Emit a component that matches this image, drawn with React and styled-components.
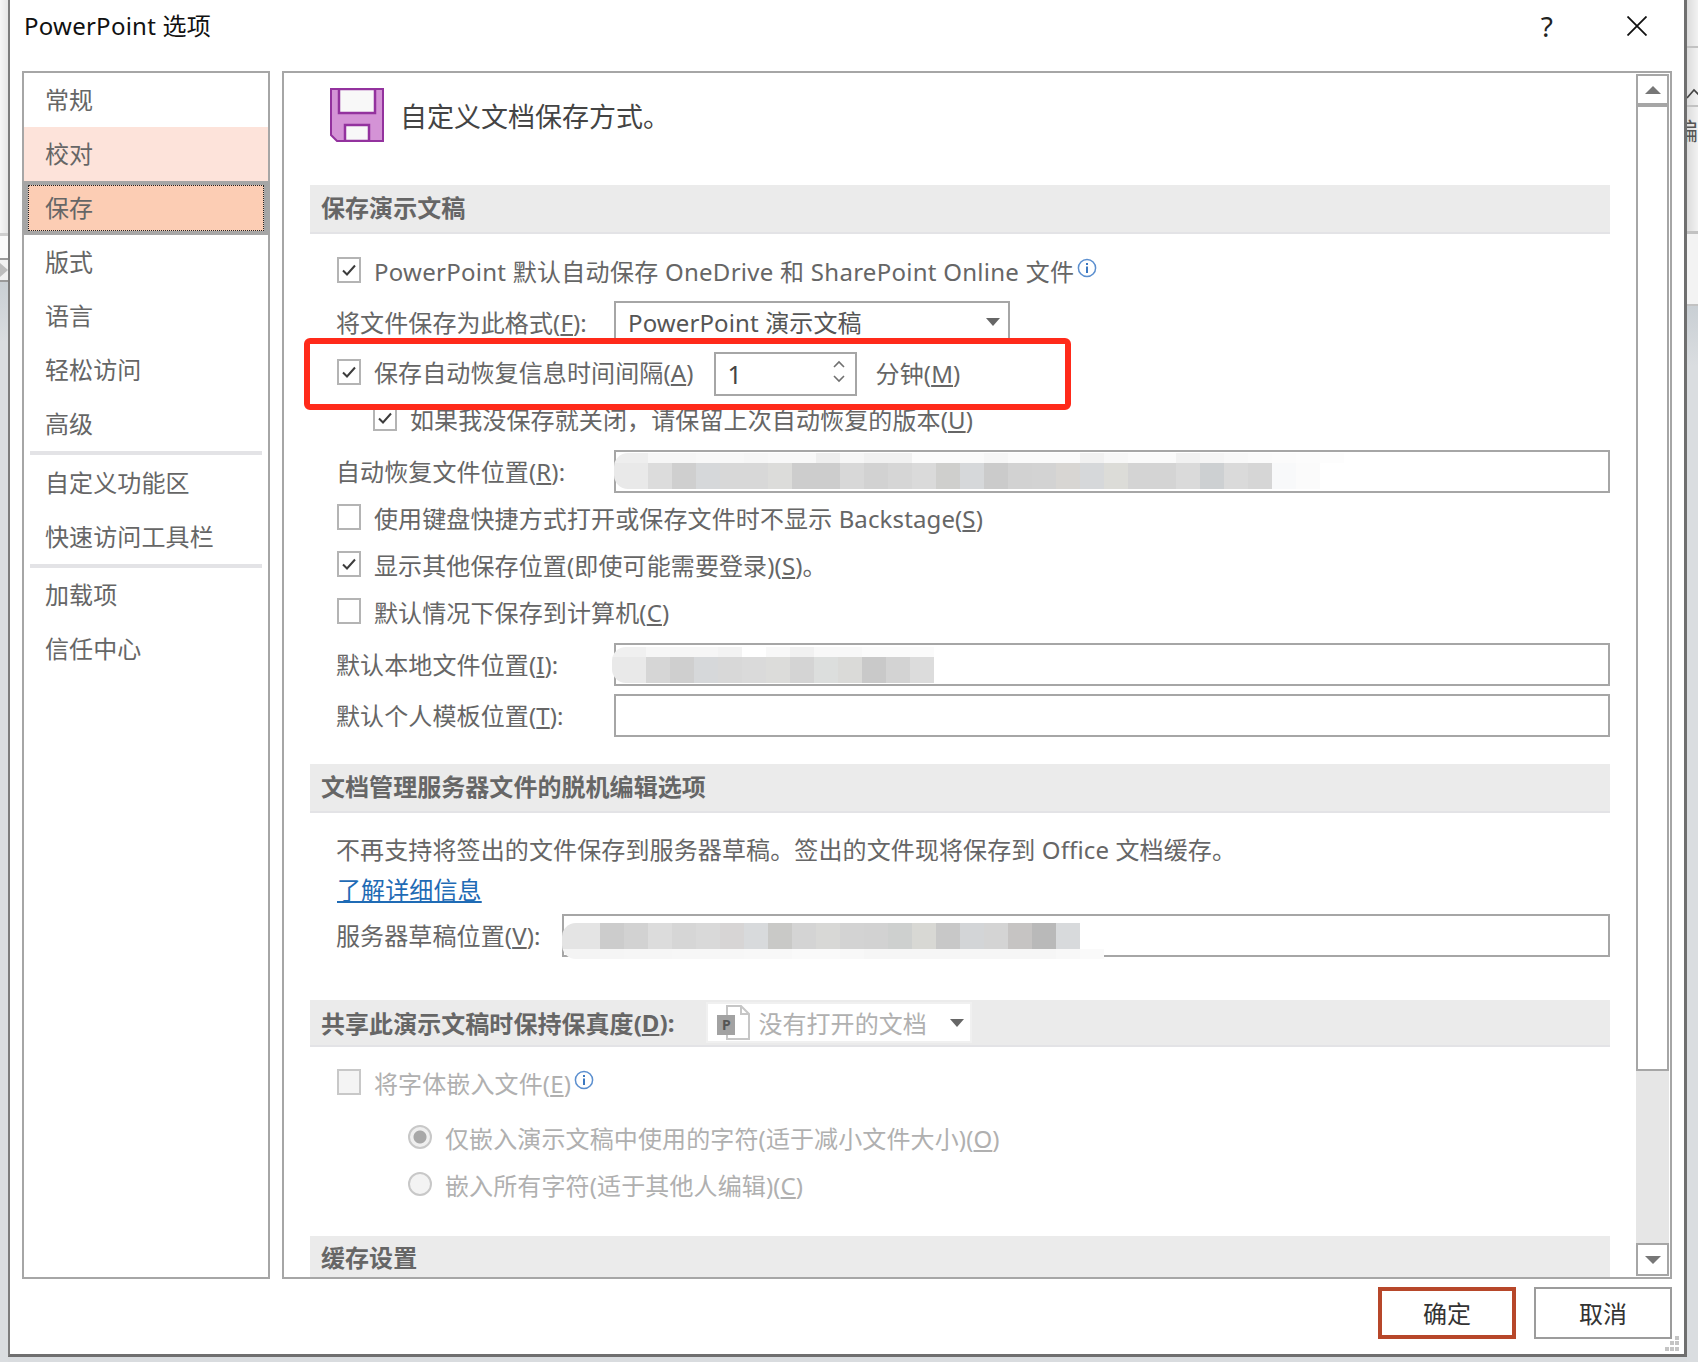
import React from 'react';
import styled, { createGlobalStyle } from 'styled-components';

const GlobalStyle = createGlobalStyle`
    html, body {
        margin: 0;
        padding: 0;
        background: #eeeeee;
    }
    body {
        font-family: "Noto Sans", "Noto Sans CJK SC", sans-serif;
        letter-spacing: 0.12px;
    }
`;

const NAV_GROUPS = [
    [['常规'], ['校对', 'hover'], ['保存', 'selected'], ['版式'], ['语言'], ['轻松访问'], ['高级']],
    [['自定义功能区'], ['快速访问工具栏']],
    [['加载项'], ['信任中心']],
];

const BLUR_ONE = {
    first: 34,
    pale: ['#eeeeee', '#f6f6f6', '#f6f6f6', '#f8f8f8', '#f8f8f8', '#f6f6f6', '#f8f8f8', '#f8f8f8', '#eeeeee', '#f6f6f6', '#f1f1f1', '#f1f1f1', '#fbfbfb', '#fbfbfb', '#fafafa', '#f6f6f6', '#fafafa', '#fafafa', '#fafafa', '#f1f1f1', '#f7f7f7', '#fafafa', '#fafafa', '#f1f1f1', '#f5f5f5', '#f8f8f8', '#fafafa', '#fbfbfb', '#fcfcfc', '#fdfdfd'],
    dark: ['#e9e9e9', '#dcdcdc', '#cfcfcf', '#d6d8da', '#d8d8d8', '#d8d8d8', '#dcdcda', '#cdcdcd', '#cdcdcd', '#d8d8d8', '#d2d2d2', '#d6d6d6', '#dadada', '#cfcfcd', '#d6d8da', '#cbcbcb', '#d2d2d2', '#d3d3d3', '#d8d6d3', '#d6d8da', '#dcdcd8', '#d4d4d4', '#d4d4d4', '#dadada', '#cdd0d2', '#dadada', '#d6d6d6', '#f8f9fa', '#fbfbfb'],
};
const BLUR_TWO = {
    first: 34,
    pale: ['#f0f0f0', '#f6f6f6', '#f6f6f6', '#f6f6f6', '#f3f3f3', '#ffffff', '#f8f8f8', '#f1f1f1', '#f8f8f8', '#f8f8f8', '#fbfbfb', '#fbfbfb', '#fbfbfb'],
    dark: ['#e9e9e9', '#d6d6d6', '#cfcfcf', '#d6d8da', '#d8d8d8', '#dadada', '#dcdcda', '#d4d4d4', '#dcdedd', '#dadad8', '#c9c9c9', '#d3d3d3', '#dcdcdc'],
};
const BLUR_THREE = {
    first: 38,
    dark: ['#e4e4e4', '#cccccc', '#d2d2d2', '#dcdcdc', '#d6d6d6', '#d9d9d9', '#d7d5d5', '#d8dadc', '#c9c9c7', '#d4d4d4', '#d8d8d6', '#d3d3d3', '#d2d2d2', '#ced0cf', '#d8d8d4', '#c8c8c8', '#d3d5d7', '#d4d4d4', '#c6c4c3', '#b9b9b9', '#d8dadc'],
    pale: ['#f4f4f4', '#f5f5f5', '#f6f6f6', '#f6f6f6', '#f7f7f7', '#f7f7f7', '#f7f7f7', '#f8f8f8', '#f8f8f8', '#fafafa', '#fafafa', '#f8f8f8', '#f6f6f6', '#f6f6f6', '#f6f6f6', '#f6f6f6', '#f6f6f6', '#f6f6f6', '#f6f6f6', '#f6f6f6', '#f8f8f8', '#fafafa'],
};

const Check = () => (
    <svg width="16" height="14" viewBox="0 0 16 14">
        <path d="M2 7.5 L6 11.5 L14 2.5" fill="none" stroke="#3c3c3c" strokeWidth="2" />
    </svg>
);

const InfoIcon = () => (
    <InfoWrap>
        <svg width="20" height="20" viewBox="0 0 20 20">
            <circle cx="10" cy="10" r="8.6" fill="#fff" stroke="#5b8fcf" strokeWidth="1.5" />
            <rect x="9" y="5" width="2" height="2" fill="#3c78c0" />
            <rect x="9" y="8.5" width="2" height="6.5" fill="#3c78c0" />
        </svg>
    </InfoWrap>
);

const SaveIcon = () => (
    <svg width="54" height="54" viewBox="0 0 54 54">
        <path d="M1 1 H53 V53 H7 L1 47 Z" fill="#d493d6" stroke="#93329e" strokeWidth="2" />
        <rect x="9" y="1" width="36" height="24" fill="#f8f8f8" stroke="#93329e" strokeWidth="2.5" />
        <rect x="15" y="37" width="24" height="16" fill="#f8f8f8" stroke="#93329e" strokeWidth="2.5" />
    </svg>
);

const DocIcon = () => (
    <DocWrap>
        <svg width="34" height="38" viewBox="0 0 34 38">
            <path d="M10 2 H24 L32 10 V35 H10 Z" fill="#fff" stroke="#c6c6c6" strokeWidth="2" />
            <path d="M24 2 V10 H32" fill="none" stroke="#c6c6c6" strokeWidth="2" />
        </svg>
        <DocBadge>P</DocBadge>
    </DocWrap>
);

const CloseIcon = () => (
    <svg width="20" height="20" viewBox="0 0 20 20">
        <path d="M0.5 0.5 L19.5 19.5 M19.5 0.5 L0.5 19.5" stroke="#111" strokeWidth="1.8" fill="none" />
    </svg>
);

const Chevron = ({ down }) => (
    <svg width="12" height="8" viewBox="0 0 12 8">
        <path d={down ? 'M1 1 L6 6 L11 1' : 'M1 7 L6 2 L11 7'} fill="none" stroke="#707070" strokeWidth="1.6" />
    </svg>
);

const tileStyle = (color, i, first) => ({ background: color, width: i === 0 ? first : 24 });

const Blur = ({ tiles, top, left, paleFirst = true }) => {
    const pale = (
        <TileRow $h={10}>
            {tiles.pale.map((c, i) => <Tile key={i} style={tileStyle(c, i, tiles.first)} />)}
        </TileRow>
    );
    return (
        <BlurBox $top={top} $left={left}>
            {paleFirst && pale}
            <TileRow $h={26}>
                {tiles.dark.map((c, i) => <Tile key={i} style={tileStyle(c, i, tiles.first)} />)}
            </TileRow>
            {!paleFirst && pale}
        </BlurBox>
    );
};

const CheckRow = ({ checked, disabled, indent, top, spacing, children, info }) => (
    <Row $top={top} $h={40} $indent={indent}>
        <Box $disabled={disabled}>{checked && <Check />}</Box>
        <Label $disabled={disabled} $spacing={spacing}>{children}</Label>
        {info && <InfoIcon />}
    </Row>
);

const App = () => (
    <>
        <GlobalStyle />
        <Page>
            <LeftStrip>
                <StripTop />
                <StripWhite />
                <StripTool>
                    <svg width="8" height="14" viewBox="0 0 8 14">
                        <path d="M0 0 L8 7 L0 14 Z" fill="#bdbdbd" />
                    </svg>
                </StripTool>
                <StripBlue />
            </LeftStrip>
            <Dialog>
                <TitleBar>
                    <Title>PowerPoint 选项</Title>
                    <TitleActions>
                        <Help>?</Help>
                        <CloseIcon />
                    </TitleActions>
                </TitleBar>
                <Body>
                    <Nav>
                        {NAV_GROUPS.map((group, i) => (
                            <NavGroup key={i} $last={i === NAV_GROUPS.length - 1}>
                                {group.map(([name, state]) => (
                                    <NavItem key={name} $state={state}>
                                        {state === 'selected' ? <NavFocus>{name}</NavFocus> : name}
                                    </NavItem>
                                ))}
                            </NavGroup>
                        ))}
                    </Nav>
                    <Panel>
                        <Content>
                            <Heading>
                                <SaveIcon />
                                <HeadingText>自定义文档保存方式。</HeadingText>
                            </Heading>
                            <Section $h={49}>保存演示文稿</Section>

                            <CheckRow checked top={16} info spacing={0.27}>PowerPoint 默认自动保存 OneDrive 和 SharePoint Online 文件</CheckRow>

                            <Row $top={12} $h={40}>
                                <FieldLabel $w={277}>将文件保存为此格式(<u>F</u>):</FieldLabel>
                                <Select>
                                    PowerPoint 演示文稿
                                    <Caret />
                                </Select>
                            </Row>

                            <Row $top={10} $h={44}>
                                <CalloutBox><Check /></CalloutBox>
                                <CalloutLabel>保存自动恢复信息时间间隔(<u>A</u>)</CalloutLabel>
                                <Spinner>
                                    1
                                    <SpinArrows>
                                        <Chevron />
                                        <Chevron down />
                                    </SpinArrows>
                                </Spinner>
                                <Minutes>分钟(<u>M</u>)</Minutes>
                            </Row>

                            <CheckRow checked indent={36} top={2}>如果我没保存就关闭，请保留上次自动恢复的版本(<u>U</u>)</CheckRow>

                            <Row $top={12} $h={43}>
                                <FieldLabel $w={277}>自动恢复文件位置(<u>R</u>):</FieldLabel>
                                <TextBox><Blur tiles={BLUR_ONE} top={1} left={-2} /></TextBox>
                            </Row>

                            <CheckRow top={4}>使用键盘快捷方式打开或保存文件时不显示 Backstage(<u>S</u>)</CheckRow>
                            <CheckRow checked top={7}>显示其他保存位置(即使可能需要登录)(<u>S</u>)。</CheckRow>
                            <CheckRow top={7}>默认情况下保存到计算机(<u>C</u>)</CheckRow>

                            <Row $top={12} $h={43}>
                                <FieldLabel $w={277}>默认本地文件位置(<u>I</u>):</FieldLabel>
                                <TextBox><Blur tiles={BLUR_TWO} top={2} left={-4} /></TextBox>
                            </Row>
                            <Row $top={8} $h={43}>
                                <FieldLabel $w={277}>默认个人模板位置(<u>T</u>):</FieldLabel>
                                <TextBox />
                            </Row>

                            <Section $top={27} $h={49}>文档管理服务器文件的脱机编辑选项</Section>

                            <Row $top={15} $h={40}>
                                <FieldLabel>不再支持将签出的文件保存到服务器草稿。签出的文件现将保存到 Office 文档缓存。</FieldLabel>
                            </Row>
                            <Row $h={40}>
                                <DocLink>了解详细信息</DocLink>
                            </Row>
                            <Row $top={6} $h={43}>
                                <FieldLabel $w={225}>服务器草稿位置(<u>V</u>):</FieldLabel>
                                <TextBox><Blur tiles={BLUR_THREE} top={7} left={-2} paleFirst={false} /></TextBox>
                            </Row>

                            <Section $top={43} $h={47} $flat>
                                共享此演示文稿时保持保真度(<u>D</u>):
                                <Combo>
                                    <DocIcon />
                                    没有打开的文档
                                    <Caret $right={6} />
                                </Combo>
                            </Section>

                            <CheckRow disabled top={15} info>将字体嵌入文件(<u>E</u>)</CheckRow>

                            <RadioRow $top={15}>
                                <Radio $on />
                                <Label $disabled>仅嵌入演示文稿中使用的字符(适于减小文件大小)(<u>O</u>)</Label>
                            </RadioRow>
                            <RadioRow $top={7}>
                                <Radio />
                                <Label $disabled>嵌入所有字符(适于其他人编辑)(<u>C</u>)</Label>
                            </RadioRow>

                            <Section $top={32} $h={48}>缓存设置</Section>
                        </Content>
                        <Scrollbar>
                            <ScrollButton><Arrow /></ScrollButton>
                            <Thumb />
                            <Track />
                            <ScrollButton $down><Arrow $down /></ScrollButton>
                        </Scrollbar>
                        <Callout />
                    </Panel>
                </Body>
                <Footer>
                    <Button $primary>确定</Button>
                    <Button>取消</Button>
                    <Grip>
                        <svg width="16" height="16" viewBox="0 0 16 16" fill="#c4c4c4">
                            <rect x="11" y="0" width="4" height="4" />
                            <rect x="6" y="5" width="4" height="4" />
                            <rect x="11" y="5" width="4" height="4" />
                            <rect x="1" y="11" width="4" height="4" />
                            <rect x="6" y="11" width="4" height="4" />
                            <rect x="11" y="11" width="4" height="4" />
                        </svg>
                    </Grip>
                </Footer>
            </Dialog>
            <RightStrip>
                <StripCell $h={48} />
                <StripCell $h={59}>
                    <StripChevron>
                        <svg width="12" height="12" viewBox="0 0 12 12">
                            <path d="M0 11 L7 3 L12 8" fill="none" stroke="#444" strokeWidth="1.6" />
                        </svg>
                    </StripChevron>
                </StripCell>
                <StripCell $h={127}><StripGlyph>编</StripGlyph></StripCell>
                <StripCell $h={72} $plain />
                <StripBlue />
            </RightStrip>
        </Page>
    </>
);

const Page = styled.div`
    width: 1698px;
    height: 1362px;
    overflow: hidden;
    display: grid;
    grid-template-columns: 8px 1679px 11px;
    background: #d9dcdf;
`;

const LeftStrip = styled.div`
    display: flex;
    flex-direction: column;
`;

const StripTop = styled.div`
    height: 233px;
    background: linear-gradient(to right, #f6f6f6, #e6e6e6);
    border-bottom: 3px solid #cfcfcf;
`;

const StripWhite = styled.div`
    height: 22px;
    background: #fbfbfb;
`;

const StripTool = styled.div`
    height: 20px;
    border-top: 2px solid #9a9a9a;
    border-bottom: 2px solid #9a9a9a;
    background: #f2f2f2;
    display: flex;
    align-items: center;
`;

const StripBlue = styled.div`
    flex: 1;
    background: linear-gradient(to bottom, #c9cfd4, #dadde0 60px);
`;

const RightStrip = styled.div`
    display: flex;
    flex-direction: column;
    overflow: hidden;
`;

const StripCell = styled.div`
    height: ${props => props.$h}px;
    flex: none;
    position: relative;
    box-sizing: border-box;
    background: ${props => props.$plain ? '#f3f3f3' : 'linear-gradient(to right, #dcdcdc, #f2f2f2)'};
    border-bottom: ${props => props.$h === 127 ? 3 : 2}px solid #c2c2c2;
`;

const StripChevron = styled.div`
    padding-top: 34px;
`;

const StripGlyph = styled.div`
    margin-left: -13px;
    padding-top: 7px;
    font-size: 24px;
    line-height: 34px;
    color: #555;
`;

const Dialog = styled.div`
    height: 1357px;
    box-sizing: border-box;
    background: #fff;
    border-left: 2px solid #7d7d7d;
    border-right: 3px solid #6f6f6f;
    border-bottom: 3px solid #6f6f6f;
    display: flex;
    flex-direction: column;
    padding-left: 12px;
`;

const TitleBar = styled.div`
    height: 71px;
    flex: none;
    display: flex;
    align-items: flex-start;
    justify-content: space-between;
`;

const Title = styled.div`
    margin: 7px 0 0 2px;
    font-size: 24px;
    line-height: 38px;
    letter-spacing: 0.25px;
    color: #111;
`;

const TitleActions = styled.div`
    display: flex;
    align-items: center;
    gap: 74px;
    margin: 16px 37px 0 0;
`;

const Help = styled.div`
    font-size: 28px;
    line-height: 20px;
    color: #222;
`;

const Body = styled.div`
    height: 1208px;
    flex: none;
    display: flex;
    gap: 12px;
`;

const Nav = styled.div`
    width: 248px;
    box-sizing: border-box;
    border: 2px solid #a6a6a6;
`;

const NavGroup = styled.div`
    position: relative;
    padding-bottom: ${props => props.$last ? 0 : 4}px;
    margin-bottom: ${props => props.$last ? 0 : 1}px;
    margin-top: ${props => props.$last ? -1 : 0}px;
    &::after {
        content: '';
        display: ${props => props.$last ? 'none' : 'block'};
        position: absolute;
        left: 6px;
        right: 6px;
        bottom: 0;
        height: 4px;
        background: #e3e3e6;
    }
`;

const NavItem = styled.div`
    height: 54px;
    box-sizing: border-box;
    padding-left: 21px;
    font-size: 24px;
    line-height: 54px;
    color: #666;
    background: ${props => props.$state === 'hover' ? '#fde3da' : props.$state === 'selected' ? '#fccdb4' : 'transparent'};
    border: ${props => props.$state === 'selected' ? '4px solid #a6a6a6' : '0'};
    ${props => props.$state === 'selected' && 'padding-left: 0;'}
`;

const NavFocus = styled.div`
    height: 100%;
    box-sizing: border-box;
    border: 1px dotted #222;
    padding-left: 16px;
    line-height: 44px;
`;

const Panel = styled.div`
    position: relative;
    width: 1390px;
    box-sizing: border-box;
    border: 2px solid #a6a6a6;
    display: flex;
`;

const Content = styled.div`
    flex: 1;
    min-width: 0;
    overflow: hidden;
    padding: 0 26px 0 26px;
    display: flex;
    flex-direction: column;
`;

const Heading = styled.div`
    height: 112px;
    flex: none;
    box-sizing: border-box;
    padding: 15px 0 0 20px;
    display: flex;
    align-items: flex-start;
    gap: 16px;
`;

const HeadingText = styled.div`
    font-size: 27px;
    line-height: 58px;
    letter-spacing: 0;
    color: #444;
`;

const Section = styled.div`
    height: ${props => props.$h}px;
    margin-top: ${props => props.$top || 0}px;
    flex: none;
    box-sizing: border-box;
    padding: 0 0 ${props => props.$flat ? 0 : 5}px 11px;
    background: #ebebeb;
    border-bottom: 2px solid #e3e3e6;
    display: flex;
    align-items: center;
    font-size: 24px;
    font-weight: 700;
    letter-spacing: 0.05px;
    color: #666;
`;

const Row = styled.div`
    height: ${props => props.$h}px;
    margin-top: ${props => props.$top || 0}px;
    margin-left: ${props => 27 + (props.$indent || 0)}px;
    flex: none;
    display: flex;
    align-items: center;
`;

const RadioRow = styled(Row).attrs({ $h: 40 })`
    margin-left: 98px;
`;

const Box = styled.div`
    width: 24px;
    height: 26px;
    flex: none;
    box-sizing: border-box;
    border: 2px solid ${props => props.$disabled ? '#c8c8c8' : '#b4b4b4'};
    background: ${props => props.$disabled ? '#f4f4f4' : '#fff'};
    margin-right: 13px;
    display: flex;
    align-items: center;
    justify-content: center;
`;

const CalloutBox = styled(Box)`
    margin-top: -5px;
`;

const Label = styled.div`
    font-size: 24px;
    letter-spacing: ${props => props.$spacing ?? 0.12}px;
    color: ${props => props.$disabled ? '#b0b0b0' : '#666'};
    white-space: nowrap;
`;

const CalloutLabel = styled(Label)`
    margin-top: -5px;
`;

const FieldLabel = styled.div`
    width: ${props => props.$w ? `${props.$w}px` : 'auto'};
    flex: none;
    margin: ${props => props.$w ? -2 : 0}px 1px 0 -1px;
    font-size: 24px;
    color: #666;
    white-space: nowrap;
`;

const InfoWrap = styled.span`
    display: flex;
    margin: -4px 0 0 3px;
`;

const Select = styled.div`
    position: relative;
    width: 396px;
    height: 43px;
    box-sizing: border-box;
    border: 2px solid #a6a6a6;
    padding-left: 12px;
    font-size: 24px;
    line-height: 39px;
    color: #555;
    background: #fff;
`;

const Caret = styled.span`
    position: absolute;
    right: ${props => props.$right || 8}px;
    top: 50%;
    margin-top: -4px;
    border-left: 7px solid transparent;
    border-right: 7px solid transparent;
    border-top: 8px solid #666;
`;

const Spinner = styled.div`
    position: relative;
    width: 143px;
    height: 44px;
    box-sizing: border-box;
    margin-left: 20px;
    border: 2px solid #a6a6a6;
    padding-left: 12px;
    font-size: 25px;
    line-height: 40px;
    color: #444;
`;

const SpinArrows = styled.div`
    position: absolute;
    right: 10px;
    top: 6px;
    display: flex;
    flex-direction: column;
    gap: 7px;
    line-height: 0;
`;

const Minutes = styled.div`
    margin: -4px 0 0 19px;
    font-size: 24px;
    color: #666;
`;

const TextBox = styled.div`
    position: relative;
    flex: 1;
    height: 43px;
    box-sizing: border-box;
    border: 2px solid #a6a6a6;
    background: #fff;
`;

const BlurBox = styled.div`
    position: absolute;
    top: ${props => props.$top}px;
    left: ${props => props.$left}px;
    display: flex;
    flex-direction: column;
    border-radius: 14px 0 0 14px;
    overflow: hidden;
`;

const TileRow = styled.div`
    display: flex;
    height: ${props => props.$h}px;
`;

const Tile = styled.div`
    flex: none;
`;

const DocLink = styled.a`
    font-size: 24px;
    color: #1f6bb5;
    text-decoration: underline;
    cursor: pointer;
`;

const Combo = styled.div`
    position: relative;
    width: 266px;
    height: 41px;
    margin-left: 32px;
    box-sizing: border-box;
    border: 2px solid #f0f0f0;
    background: #fff;
    display: flex;
    align-items: center;
    padding-left: 9px;
    font-weight: 400;
    color: #b0b0b0;
`;

const DocWrap = styled.span`
    position: relative;
    width: 34px;
    height: 38px;
    margin-right: 7px;
    line-height: 0;
`;

const DocBadge = styled.span`
    position: absolute;
    left: 0;
    top: 11px;
    width: 18px;
    height: 20px;
    background: #a2a2a2;
    color: #555;
    font-size: 14px;
    font-weight: 700;
    line-height: 20px;
    text-align: center;
`;

const Radio = styled.div`
    width: 24px;
    height: 24px;
    flex: none;
    margin-right: 13px;
    box-sizing: border-box;
    border: 2px solid #c8c8c8;
    border-radius: 50%;
    background: ${props => props.$on ? 'radial-gradient(circle, #a8a8a8 0 6px, #efefef 7px)' : '#f3f3f3'};
`;

const Scrollbar = styled.div`
    width: 33px;
    flex: none;
    margin: 1px 1px 1px 0;
    display: flex;
    flex-direction: column;
    background: #e6e6e6;
`;

const ScrollButton = styled.div`
    height: 33px;
    flex: none;
    box-sizing: border-box;
    border: 2px solid #a6a6a6;
    border-bottom-width: ${props => props.$down ? 2 : 4}px;
    background: #fff;
    display: flex;
    align-items: center;
    justify-content: center;
`;

const Arrow = styled.span`
    border-left: 8px solid transparent;
    border-right: 8px solid transparent;
    ${props => props.$down ? 'border-top' : 'border-bottom'}: 8px solid #777;
`;

const Thumb = styled.div`
    height: 964px;
    flex: none;
    box-sizing: border-box;
    border: 2px solid #a6a6a6;
    border-top: 0;
    background: #fff;
`;

const Track = styled.div`
    flex: 1;
`;

const Callout = styled.div`
    position: absolute;
    left: 20px;
    top: 265px;
    width: 767px;
    height: 72px;
    box-sizing: border-box;
    border: 6px solid #ff2a1a;
    border-radius: 6px;
    pointer-events: none;
`;

const Footer = styled.div`
    position: relative;
    flex: 1;
    display: flex;
    justify-content: flex-end;
    align-items: flex-start;
    gap: 18px;
    padding: 8px 12px 0 0;
`;

const Button = styled.div`
    width: 138px;
    height: 52px;
    box-sizing: border-box;
    padding-bottom: 2px;
    border: ${props => props.$primary ? '4px solid #b7472a' : '2px solid #9c9c9c'};
    display: flex;
    align-items: center;
    justify-content: center;
    font-size: 24px;
    color: #333;
`;

const Grip = styled.div`
    position: absolute;
    right: 4px;
    bottom: 2px;
    line-height: 0;
`;

export default App;
